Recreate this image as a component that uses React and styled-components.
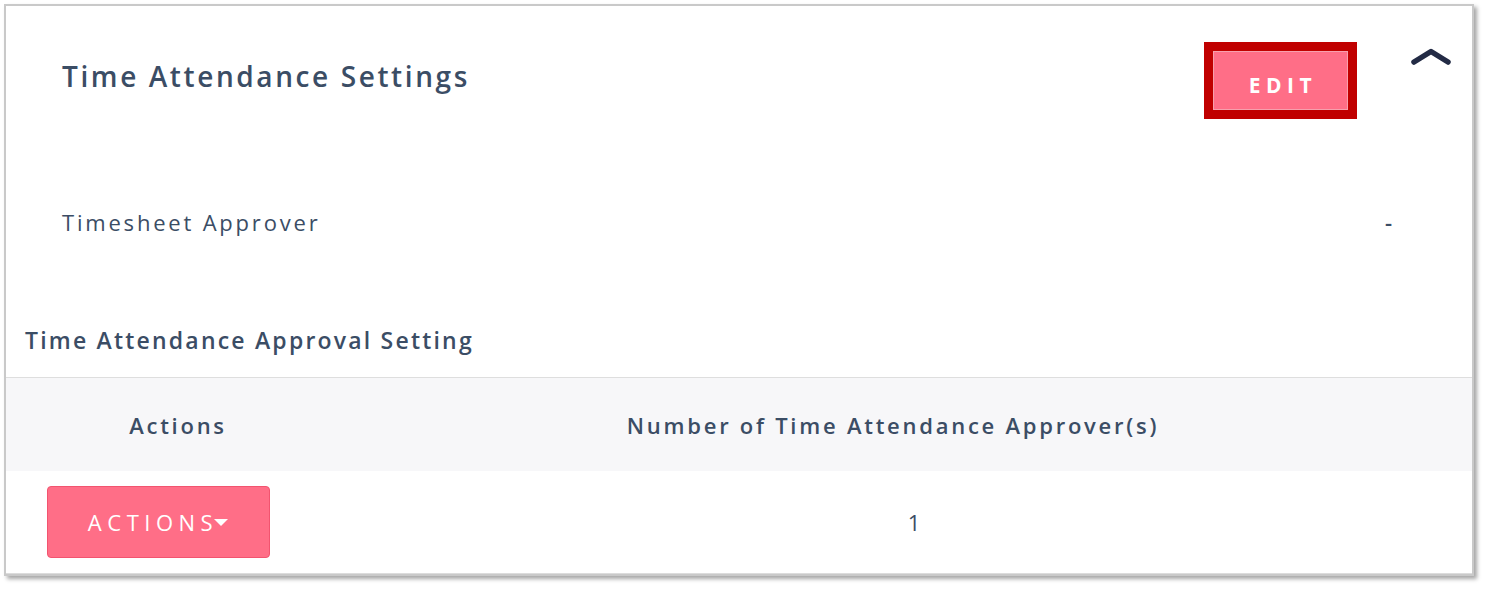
import styled, { createGlobalStyle } from 'styled-components';

const GlobalStyle = createGlobalStyle`
    html, body {
        margin: 0;
        padding: 0;
        background: #ffffff;
    }
    body {
        font-family: 'Open Sans', 'Liberation Sans', sans-serif;
        color: #3b4d65;
    }
`;

export default function App() {
    return (
        <>
            <GlobalStyle />
            <Page>
                <Card>
                    <HeaderRow>
                        <Title>Time Attendance Settings</Title>
                        <EditButton>EDIT</EditButton>
                        <Collapse aria-label="collapse">
                            <svg width="42" height="22" viewBox="0 0 42 22">
                                <path
                                    d="M4 16 L21 5.5 L38 16"
                                    fill="none"
                                    stroke="#232b45"
                                    strokeWidth="5.5"
                                    strokeLinecap="round"
                                    strokeLinejoin="round"
                                />
                            </svg>
                        </Collapse>
                    </HeaderRow>

                    <FieldRow>
                        <FieldLabel>Timesheet Approver</FieldLabel>
                        <FieldValue>-</FieldValue>
                    </FieldRow>

                    <SectionTitle>Time Attendance Approval Setting</SectionTitle>

                    <Table>
                        <HeadRow>
                            <HeadCell>Actions</HeadCell>
                            <HeadCell $shift>Number of Time Attendance Approver(s)</HeadCell>
                        </HeadRow>
                        <BodyRow>
                            <BodyCell>
                                <ActionsButton>
                                    ACTIONS
                                    <Caret />
                                </ActionsButton>
                            </BodyCell>
                            <BodyCell $nudge>1</BodyCell>
                        </BodyRow>
                    </Table>
                </Card>
            </Page>
        </>
    );
}

// styled-components
const Page = styled.div`
    width: 1486px;
    height: 590px;
    padding: 4px;
    box-sizing: border-box;
`;

const Card = styled.div`
    width: 1470px;
    height: 572px;
    box-sizing: border-box;
    border: 2px solid #c9c9c9;
    background: #ffffff;
    box-shadow: 3px 3px 4px rgba(0, 0, 0, 0.35);
    display: flex;
    flex-direction: column;
    overflow: hidden;
`;

const HeaderRow = styled.div`
    height: 140px;
    display: flex;
    align-items: flex-start;
    padding-left: 56px;
    padding-right: 20px;
`;

const Title = styled.h2`
    margin: 54px 0 0 0;
    font-size: 28px;
    line-height: 32px;
    font-weight: 600;
    letter-spacing: 2.6px;
    color: #3b4d65;
`;

const EditButton = styled.button`
    margin: 36px 0 0 auto;
    width: 153px;
    height: 77px;
    box-sizing: border-box;
    border: 9px solid #c00000;
    background: #ff6e87;
    box-shadow: inset 0 0 0 1px #f7a0ad;
    color: #ffffff;
    font-family: 'Open Sans', 'Liberation Sans', sans-serif;
    font-size: 21px;
    font-weight: 700;
    letter-spacing: 5.5px;
    padding: 8px 0 0 5px;
    cursor: pointer;
`;

const Collapse = styled.button`
    margin: 40px 0 0 53px;
    padding: 0;
    border: none;
    background: none;
    width: 42px;
    height: 22px;
    display: flex;
    cursor: pointer;
`;

const FieldRow = styled.div`
    margin-top: 52px;
    height: 48px;
    display: flex;
    align-items: center;
    justify-content: space-between;
    padding-left: 56px;
    padding-right: 80px;
`;

const FieldLabel = styled.span`
    font-size: 22px;
    font-weight: 400;
    letter-spacing: 2.8px;
`;

const FieldValue = styled.span`
    font-size: 22px;
    font-weight: 600;
`;

const SectionTitle = styled.h3`
    margin: 78px 0 0 0;
    padding-left: 19px;
    font-size: 23px;
    line-height: 32px;
    font-weight: 600;
    letter-spacing: 2.2px;
    color: #3b4d65;
`;

const Table = styled.div`
    margin-top: 21px;
    border-top: 1px solid #dedede;
    display: flex;
    flex-direction: column;
`;

const HeadRow = styled.div`
    height: 93px;
    display: grid;
    grid-template-columns: 344px 1fr;
    align-items: center;
    background: #f7f7f9;
`;

const HeadCell = styled.div`
    text-align: center;
    font-size: 22px;
    font-weight: 600;
    letter-spacing: 2.75px;
    padding-right: ${({ $shift }) => ($shift ? '36px' : '0')};
`;

const BodyRow = styled.div`
    height: 102px;
    display: grid;
    grid-template-columns: 344px 1fr;
    align-items: center;
    border-bottom: 1px solid #dcdcdc;
`;

const BodyCell = styled.div`
    text-align: center;
    font-size: 22px;
    font-weight: 400;
    color: #3b4d65;
    padding-left: ${({ $nudge }) => ($nudge ? '6px' : '0')};
`;

const ActionsButton = styled.button`
    margin-left: -40px;
    width: 223px;
    height: 72px;
    box-sizing: border-box;
    border: 1px solid #f2546f;
    border-radius: 4px;
    background: #ff6e87;
    color: #ffffff;
    font-family: 'Open Sans', 'Liberation Sans', sans-serif;
    font-size: 22px;
    font-weight: 400;
    letter-spacing: 5.5px;
    display: inline-flex;
    align-items: center;
    justify-content: center;
    cursor: pointer;
`;

const Caret = styled.span`
    display: inline-block;
    margin-left: -4px;
    width: 0;
    height: 0;
    border-left: 7px solid transparent;
    border-right: 7px solid transparent;
    border-top: 7px solid #ffffff;
`;
